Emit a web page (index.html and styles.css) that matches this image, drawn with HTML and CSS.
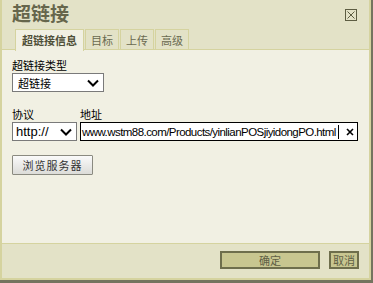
FILE: index.html
```html
<!DOCTYPE html>
<html lang="zh">
<head>
  <meta charset="UTF-8" />
  <title>超链接</title>
  <link rel="stylesheet" href="styles.css">
</head>
<body>
  <div class="dialog">
    <div class="title-bar">
      <span class="title">超链接</span>
      <span class="close">
        <svg width="12" height="12" viewBox="0 0 12 12">
          <rect x="0.5" y="0.5" width="11" height="11" fill="none" stroke="#5d5d42" />
          <path d="M2.5 2.5 L9.5 9.5 M9.5 2.5 L2.5 9.5" stroke="#5d5d42" stroke-width="1" />
        </svg>
      </span>
    </div>

    <div class="tabs">
      <div class="tab active">超链接信息</div>
      <div class="tab">目标</div>
      <div class="tab">上传</div>
      <div class="tab">高级</div>
    </div>

    <div class="panel">
      <div class="label">超链接类型</div>
      <div class="select type-select">
        <span>超链接</span>
        <svg width="12" height="8" viewBox="0 0 12 8"><path d="M1 1.5 L6 6.5 L11 1.5" fill="none" stroke="#000" stroke-width="2" /></svg>
      </div>

      <div class="row">
        <div class="field">
          <div class="label">协议</div>
          <div class="select proto-select">
            <span>http://</span>
            <svg width="12" height="8" viewBox="0 0 12 8"><path d="M1 1.5 L6 6.5 L11 1.5" fill="none" stroke="#000" stroke-width="2" /></svg>
          </div>
        </div>
        <div class="field">
          <div class="label">地址</div>
          <div class="url-input">
            <span class="url-text">www.wstm88.com/Products/yinlianPOSjiyidongPO.html</span>
            <span class="caret"></span>
            <svg class="clear" width="10" height="10" viewBox="0 0 10 10"><path d="M2 2 L8 8 M8 2 L2 8" stroke="#000" stroke-width="1.6" /></svg>
          </div>
        </div>
      </div>

      <button class="browse">浏览服务器</button>
    </div>

    <div class="footer">
      <button class="btn ok">确定</button>
      <button class="btn">取消</button>
    </div>
  </div>
</body>
</html>
```

FILE: styles.css
```css
body {
  margin: 0;
  padding: 0;
  width: 373px;
  height: 283px;
  background: #74745f;
  font-family: "Liberation Sans", "Noto Sans CJK SC", sans-serif;
  font-size: 12px;
  color: #000;
  overflow: hidden;
}

.dialog {
  width: 367px;
  height: 278px;
  background: #e3e2c7;
  border-left: 2px solid #d5d39f;
  border-right: 2px solid #d5d39f;
  border-bottom: 2px solid #d5d39f;
  display: flex;
  flex-direction: column;
}

.title-bar {
  height: 29px;
  display: flex;
  align-items: flex-start;
  justify-content: space-between;
}

.title {
  font-family: "Noto Sans CJK SC", sans-serif;
  font-size: 19px;
  font-weight: bold;
  color: #66664c;
  line-height: 24px;
  margin: 1px 0 0 10px;
}

.close {
  margin: 9px 12px 0 0;
  height: 12px;
}

.tabs {
  display: flex;
  gap: 1px;
  padding-left: 13px;
  height: 20px;
  position: relative;
  z-index: 1;
}

.tab {
  font-family: "Noto Sans CJK SC", sans-serif;
  font-size: 11px;
  color: #6a6a50;
  border: 1px solid #d5d39f;
  border-bottom: none;
  padding: 0 5px;
  line-height: 20px;
  background: #e3e2c7;
}

.tab.active {
  background: #f1f0e3;
  font-weight: bold;
  color: #4f4f38;
  padding: 0 6px;
  height: 21px;
}

.panel {
  height: 195px;
  background: #f1f0e3;
  border-top: 1px solid #d5d39f;
  border-bottom: 1px solid #d5d39f;
  padding: 7px 10px 0 10px;
  box-sizing: border-box;
}

.label {
  font-family: "Noto Sans CJK SC", sans-serif;
  font-size: 11px;
  line-height: 16px;
  height: 16px;
}

.select {
  height: 19px;
  box-sizing: border-box;
  border: 1px solid #7a7a7a;
  background: #fff;
  display: flex;
  align-items: center;
  justify-content: space-between;
  padding: 0 4px 0 5px;
  font-size: 12px;
}

.type-select {
  width: 92px;
  font-family: "Noto Sans CJK SC", sans-serif;
  font-size: 11px;
}

.proto-select {
  width: 65px;
  padding-left: 3px;
  font-size: 13px;
}

.row {
  display: flex;
  gap: 3px;
  margin-top: 14px;
}

.url-input {
  width: 278px;
  height: 19px;
  box-sizing: border-box;
  border: 1px solid #000;
  background: #fff;
  display: flex;
  align-items: center;
  padding-left: 1px;
  font-size: 11.5px;
  letter-spacing: -0.56px;
  white-space: nowrap;
  overflow: hidden;
}

.url-text {
  flex-shrink: 0;
}

.caret {
  flex-shrink: 0;
  width: 1px;
  height: 14px;
  background: #000;
  margin-left: 2px;
}

.clear {
  flex-shrink: 0;
  margin-left: 6px;
}

.browse {
  margin-top: 14px;
  width: 81px;
  height: 20px;
  font-family: "Noto Sans CJK SC", sans-serif;
  font-size: 11px;
  color: #333;
  border: 1px solid #8a8a80;
  border-radius: 1px;
  background: linear-gradient(#fafafa, #dcdcd8);
  padding: 0;
  letter-spacing: 1px;
}

.footer {
  display: flex;
  justify-content: flex-end;
  gap: 9px;
  padding: 7px 10px 0 0;
}

.btn {
  height: 18px;
  padding: 0 2px;
  font-family: "Noto Sans CJK SC", sans-serif;
  font-size: 11px;
  color: #5f5f45;
  background: #c8c690;
  border: 2px solid #6e6e4c;
  line-height: 14px;
}

.btn.ok {
  width: 100px;
}
```
